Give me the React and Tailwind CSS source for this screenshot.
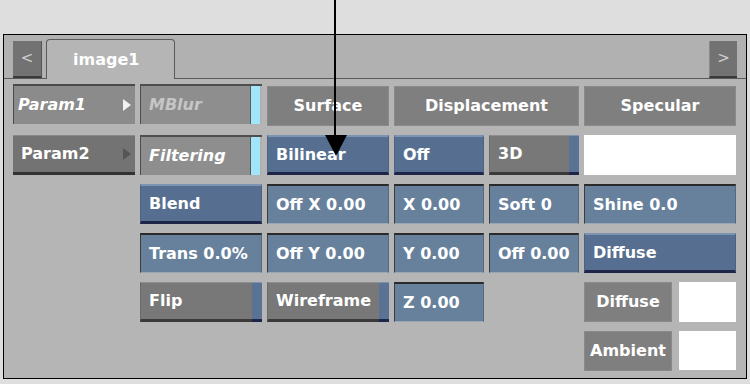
import React from "react";

const font = { fontFamily: '"DejaVu Sans", "Liberation Sans", sans-serif' };

const Blue = ({ children }) => (
  <div className="h-[40px] flex items-center pl-2 text-white bg-[#566f90] border-t-2 border-t-[#7c93b2] border-b-[3px] border-b-[#1e2548] border-x border-x-[#4b6283]">
    {children}
  </div>
);

const Field = ({ children }) => (
  <div className="h-[40px] flex items-center pl-2 text-white bg-[#67819d] border-t-2 border-t-[#2a2a2a] border-l border-l-[#3c3c3c] border-r border-r-[#56687e] border-b border-b-[#9aa6b3]">
    {children}
  </div>
);

const Toggle = ({ children }) => (
  <div className="h-[40px] flex">
    <div className="flex-1 flex items-center pl-2 text-white bg-[#787878] border-t border-t-[#8e8e8e] border-b-[3px] border-b-[#3a3a3a] border-l border-l-[#6a6a6a]">
      {children}
    </div>
    <div className="w-[10px] bg-[#5a7294] border-t border-t-[#7c93b2] border-b-[3px] border-b-[#1e2548]" />
  </div>
);

const Label = ({ children, className = "" }) => (
  <div className={`h-[40px] flex items-center justify-center text-white bg-[#7f7f7f] border border-[#8a8a8a] ${className}`}>
    {children}
  </div>
);

const Cyan = ({ children, dim }) => (
  <div className="h-[40px] flex bg-[#8e8e8e] border-t-2 border-t-[#4e4e4e] border-l border-l-[#4e4e4e]">
    <div className={`flex-1 flex items-center pl-2 italic ${dim ? "text-[#c6c6c6]" : "text-white"}`}>{children}</div>
    <div className="w-[10px] bg-[#a1e5fb] border-l border-l-[#5a5a5a]" />
    <div className="w-[2px] bg-[#b0b0b0]" />
  </div>
);

const Tri = ({ color }) => (
  <svg width="8" height="12" viewBox="0 0 8 12">
    <polygon points="0,0 8,6 0,12" fill={color} />
  </svg>
);

const Empty = () => <div />;

export default function App() {
  return (
    <div className="relative w-[750px] h-[384px] bg-[#dedede] pt-[34px] px-[3px] text-[16px] font-bold overflow-hidden" style={font}>
      <div className="h-[345px] bg-[#b5b5b5] border border-black flex flex-col">
        <div className="h-[44px] flex items-end px-[9px] border-b border-b-[#5a5a5a] bg-[#b1b1b1]">
          <div className="w-[29px] h-[37px] bg-[#727272] border-b-2 border-b-[#3a3a3a] border-r border-r-[#555] flex items-center justify-center text-[#cfcfcf] font-normal text-[15px]">
            &lt;
          </div>
          <div className="ml-[4px] w-[129px] h-[40px] -mb-px bg-[#b5b5b5] border border-b-0 border-[#5a5a5a] rounded-t-[4px] flex items-center pl-[26px] text-white">
            image1
          </div>
          <div className="flex-1" />
          <div className="w-[28px] h-[37px] bg-[#727272] border-b-2 border-b-[#3a3a3a] border-l border-l-[#8a8a8a] flex items-center justify-center text-[#cfcfcf] font-normal text-[15px]">
            &gt;
          </div>
        </div>

        <div className="pt-[5px] pl-[9px] grid grid-cols-[122px_122px_122px_90px_90px_152px] gap-x-[5px] gap-y-[9px]">
          <div className="h-[40px] flex items-center justify-between pl-1 pr-1 bg-[#8b8b8b] border-t-2 border-t-[#4a4a4a] border-l border-l-[#4a4a4a] text-white italic">
            Param1
            <Tri color="#f2f2f2" />
          </div>
          <Cyan dim>MBlur</Cyan>
          <Label className="mt-[2px] h-[38px]">Surface</Label>
          <Label className="col-span-2 mt-[2px] h-[38px]">Displacement</Label>
          <Label className="mt-[2px] h-[38px]">Specular</Label>

          <div className="h-[40px] flex items-center justify-between pl-2 pr-1 bg-[#737373] border-t border-t-[#888] border-b-[3px] border-b-[#333] text-white">
            Param2
            <Tri color="#555555" />
          </div>
          <Cyan>Filtering</Cyan>
          <Blue>Bilinear</Blue>
          <Blue>Off</Blue>
          <Toggle>3D</Toggle>
          <div className="h-[40px] bg-white" />

          <Empty />
          <Blue>Blend</Blue>
          <Field>Off X 0.00</Field>
          <Field>X 0.00</Field>
          <Field>Soft 0</Field>
          <Field>Shine 0.0</Field>

          <Empty />
          <Field>Trans 0.0%</Field>
          <Field>Off Y 0.00</Field>
          <Field>Y 0.00</Field>
          <Field>Off 0.00</Field>
          <Blue>Diffuse</Blue>

          <Empty />
          <Toggle>Flip</Toggle>
          <Toggle>Wireframe</Toggle>
          <Field>Z 0.00</Field>
          <Empty />
          <div className="flex gap-[7px]">
            <Label className="w-[88px]">Diffuse</Label>
            <div className="flex-1 h-[40px] bg-white" />
          </div>

          <Empty />
          <Empty />
          <Empty />
          <Empty />
          <Empty />
          <div className="flex gap-[7px]">
            <Label className="w-[88px]">Ambient</Label>
            <div className="flex-1 h-[39px] bg-white" />
          </div>
        </div>
      </div>

      <svg className="absolute left-0 top-0 pointer-events-none" width="750" height="384">
        <line x1="335" y1="0" x2="335" y2="137" stroke="#000" strokeWidth="2" />
        <polygon points="325,135 347,135 336,156" fill="#000" />
      </svg>
    </div>
  );
}
